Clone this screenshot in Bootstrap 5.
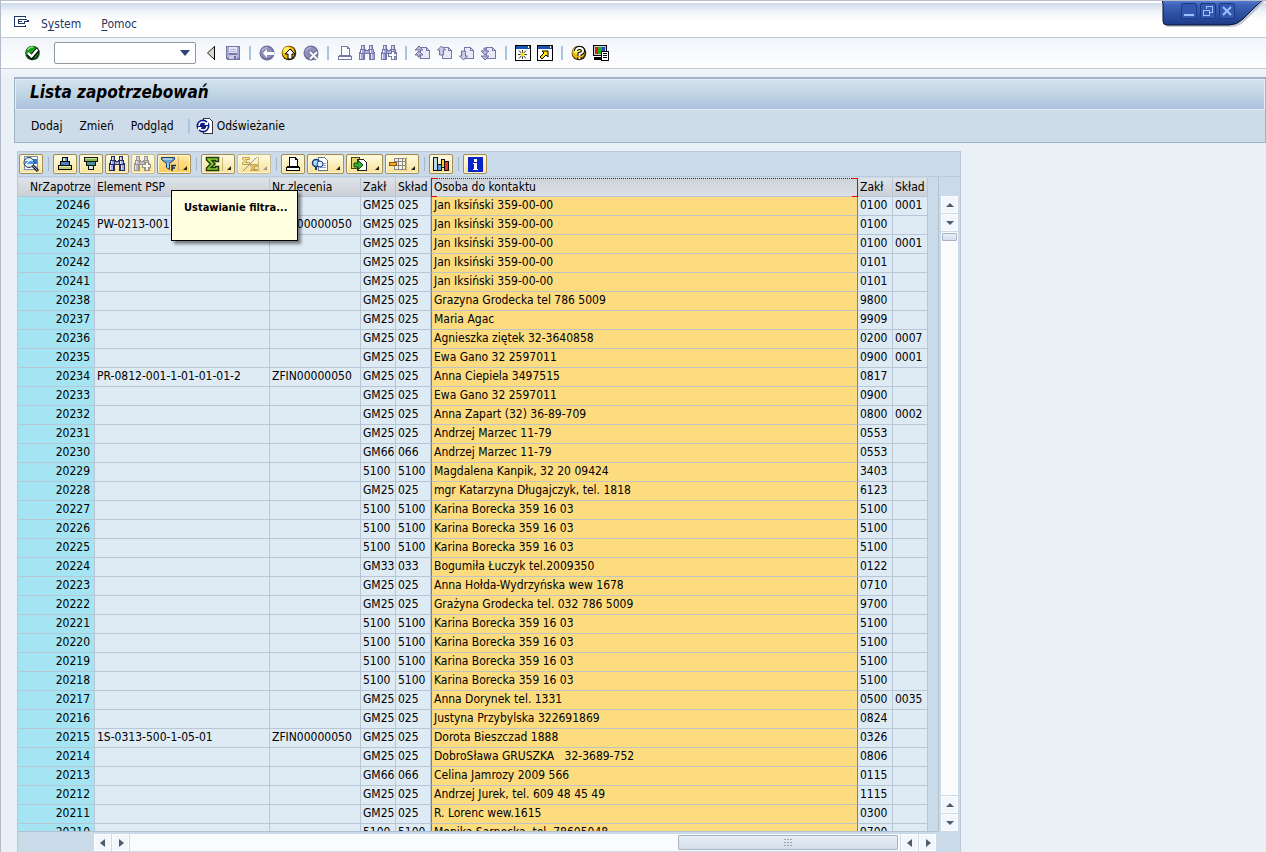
<!DOCTYPE html>
<html lang="pl">
<head>
<meta charset="utf-8">
<meta name="viewport" content="width=device-width, initial-scale=1">
<title>Lista zapotrzebowań</title>
<link href="https://cdn.jsdelivr.net/npm/bootstrap@5.3.0/dist/css/bootstrap.min.css" rel="stylesheet">
<style>
body{font-family:"DejaVu Sans Condensed","DejaVu Sans",sans-serif;font-size:12px;line-height:18px;color:#000;background:#e9f0f6;border-left:1px solid #b4bccb;border-top:1px solid #b4bccb}
button{padding:0;border:0;background:none;color:inherit;display:flex;align-items:center;justify-content:center}
svg{display:block;flex:none}
.px{shape-rendering:crispEdges}
.dim{color:#7878a8}
.menubar{height:37px;padding:8px 0 0 12px;gap:20px;border-top:2px solid #fff;border-bottom:1px solid #c3c8d2;background:linear-gradient(#cdd9ea,#eef3f9 8px,#fff 18px)}
.menubar a{color:#1f3864;text-decoration:none}
.menubar u{text-underline-offset:2px}
.winmenu{gap:10px}
.stdbar{height:31px;padding-left:23px;gap:6px;background:linear-gradient(#f1f4fa,#fff);border-bottom:1px solid #c3c8d2}
.cmd{width:142px;height:22px;margin:0 1px 0 7px;background:#fff;border:1px solid #8f979f;border-radius:2px}
.cmd input{border:0;outline:0;background:none;min-width:0}
.cmd button{width:22px}
.vsep{width:6px;height:14px;flex:none;background:linear-gradient(#a9c4de,#a9c4de) center/2px 100% no-repeat}
.workarea{padding:8px 0 0 13px;background:linear-gradient(#f3f6fa,#e9f0f6 8px)}
.titlepanel{border:1px solid #9fb2c8;border-top-width:2px;background:#cddce8}
.titlepanel h1{margin:0;height:31px;padding:0 0 5px 14px;font-size:17px;line-height:24px;font-weight:700;font-style:italic;background:linear-gradient(#d2e2ee,#c0d4e3 50%,#a9c1dc);border:1px solid #e3edf6}
.funcs{height:32px;padding-left:16px;gap:17px}
.funcs .vsep{margin-left:-5px}
.alv{width:944px;margin:8px 0 0 3px;border:1px solid #b9c9da;border-bottom:0;background:#cbdae9}
.alvbar{height:25px;gap:2px;padding-left:1px;border-bottom:1px solid #bccbdc}
.tb{width:24px;height:20px;flex:none;border:1px solid #a08d57;border-radius:2px;background:linear-gradient(#fffbe6,#fbeebb 50%,#f7e096);box-shadow:inset 0 0 0 1px #fff6d0}
.tb.split{width:34px}
.tb.menu{width:37px}
.tb.hot{background:linear-gradient(#ffe9ac,#ffd878 50%,#f9cb58)}
.tb.split,.tb.menu{position:relative;justify-content:flex-start;padding-left:3px}
.tb.split::after,.tb.menu::after{content:"";position:absolute;right:3px;bottom:3px;border-left:4px solid transparent;border-bottom:4px solid #222}
.tb.split::before{content:"";position:absolute;right:11px;top:2px;bottom:2px;width:1px;background:#cdb978}
.tb:disabled{border-color:#c9bd96;color:#777}
.tb:disabled::after{border-bottom-color:#999}
.alvbar .navy{color:#252c60}
.alvbar .vsep{background-image:linear-gradient(#aab6c5,#aab6c5);background-size:1px 100%}
.viewport{width:921px;border-right:1px solid #b2c1d2;border-bottom:1px solid #b2c1d2;padding-top:1px}
.grid{table-layout:fixed;width:910px;border-collapse:separate;border-spacing:0}
.grid th,.grid td{height:19px;padding:0 0 2px 2px;line-height:16px;white-space:pre;overflow:hidden;border-right:1px solid #b8c6d6;border-bottom:1px solid #b8c6d6;background:#deeaf4;font-weight:400}
.grid thead th{padding:1px 0 0 2px;line-height:17px;background:linear-gradient(#dde3ea,#d3d7dc 60%,#c9d0d8)}
.grid tbody th{background:#a5e4f2;text-align:right;padding-right:4px}
.grid thead th:first-child{text-align:right;padding-right:3px}
.grid td.sel{background:#fddc80;border-left:1px solid #c66a28;border-right-color:#c66a28;border-bottom-color:#bfc3c2}
.grid thead th.sel{position:relative;overflow:visible;border-top:1px dotted #333;padding:0 0 0 3px;background:linear-gradient(#ced3da,#dde0e5)}
.grid thead th.sel::before,.grid thead th.sel::after{content:"";position:absolute;top:-1px;bottom:-1px;width:6px;border:1px solid #e00000}
.grid thead th.sel::before{left:0;border-right:0}
.grid thead th.sel::after{right:-1px;border-left:0}
.sb{width:17px;height:17px;flex:none;background:#f3f6fb;border:1px solid #fbfdff;color:#4b5d6e}
.vscroll{width:17px;margin:19px 0 1px 2px;gap:1px}
.track{background:#fafbfc}
.thumb{background:linear-gradient(#e8eef5,#d3deea);border:1px solid #a8b4c0;border-radius:1px}
.vscroll .thumb{height:8px;width:15px;margin:1px}
.hscroll{padding:2px 0 1px 76px;width:918px;gap:1px}
.hscroll .thumb{width:220px;height:15px;margin:1px 2px 1px auto;color:#98a5b3}
.tip{position:absolute;left:153px;top:38px;width:127px;height:51px;padding:8px 12px;background:#ffffe1;border:1px solid #000;box-shadow:3px 3px 3px #0007;font-size:11px;font-weight:700;line-height:18px;white-space:nowrap;z-index:2}
.wincap{position:absolute;top:-1px;right:0;width:106px;height:30px}
.wincap .caps{position:absolute;left:21px;top:3px;gap:3px}
.wincap button{width:16px;height:16px;border:1px solid #1d3a80;border-radius:2px;background:#3358b0}
</style>
</head>
<body class="vh-100 overflow-hidden d-flex flex-column position-relative">
<svg width="0" height="0" class="position-absolute" aria-hidden="true">
<defs>
<symbol id="back" viewBox="0 0 16 16"><path d="M11.500 1.500v13L4.500 8z" fill="#d8d8d0" stroke="#222"/><path d="M11.500 1v14" stroke="#000"/></symbol>
<symbol id="ok" viewBox="0 0 16 16"><circle cx="8" cy="8" r="7.300" fill="#0b4a12"/><circle cx="7.500" cy="7.500" r="6" fill="#1d9a22"/><path d="M3 5q2-3.500 6-3" stroke="#7ee07a" fill="none" stroke-width="1.500"/><path d="M3.500 8.500 7 12l6.500-7.500" fill="none" stroke="#000" stroke-width="4.500"/><path d="M3.500 8 7 11.500 13 4.500" fill="none" stroke="#fff" stroke-width="2.500"/></symbol>
<symbol id="save" viewBox="0 0 16 16"><g class="px"><path d="M1 1h14v14H2l-1-1z" fill="#7676a6"/><path d="M2 2h2v11H2zM12 2h2v11h-2z" fill="#a9a9d4"/><path d="M4 2h8v6H4z" fill="#e6e6fa"/><path d="M5 4h6v1H5zM5 6h6v1H5z" fill="#b4b4d4"/><path d="M4 10h8v4H4z" fill="#c9c9e6"/><path d="M9 11h2v3H9z" fill="#6c6c9c"/></g></symbol>
<symbol id="gball" viewBox="0 0 16 16"><circle cx="8" cy="8" r="7.500" fill="#6d6d9d"/><circle cx="7.500" cy="7.500" r="6" fill="#8e8ebb"/><path d="M3 6q1-3 5-3.500" stroke="#c5c5e2" fill="none"/></symbol>
<symbol id="yball" viewBox="0 0 16 16"><circle cx="8" cy="8" r="7.300" fill="#3a2a00"/><circle cx="7.500" cy="7.500" r="6.300" fill="#f2b705"/><circle cx="6" cy="5.500" r="3.500" fill="#ffec60"/></symbol>
<symbol id="print" viewBox="0 0 16 16"><g class="px" stroke="currentColor" fill="#fff"><path d="M4.500 1.500h6l2 2v7h-8z"/><path d="M10.500 1.500v2h2" fill="none"/><path d="M1.500 11.500h13v3h-13z"/><path d="M4 10.500H2.500v1m10-1h1v1" fill="none"/></g></symbol>
<symbol id="bino" viewBox="0 0 16 16"><g class="px"><path d="M2 0h4v4h1v1h2V4h1V0h4v4h1v3h1v8h-6V9H6v6H0V7h1V4h1z" fill="currentColor"/><path d="M3 1h2v3H3zM11 1h2v3h-2zM2 5h3v3H2zM11 5h3v3h-3zM1 9h3v5H1zM12 9h3v5h-3zM6 6h4v2H6z" fill="#a8acd8"/><path d="M3 1h1v3H3zM11 1h1v3h-1zM2 5h1v3H2zM11 5h1v3h-1zM1 9h1v5H1zM12 9h1v5h-1z" fill="#e2e4f6"/></g></symbol>
<symbol id="plus" viewBox="0 0 16 16"><path class="px" d="M10 6h4v2h2v4h-2v3h-4v-3H7V8h3z" fill="currentColor"/><path class="px" d="M11 7h2v2h2v2h-2v3h-2v-3H8V9h3z" fill="#fff"/></symbol>
<symbol id="page" viewBox="0 0 16 16"><g class="px" stroke="#7878a8"><path d="M5.500 2.500h6l3 3v8h-9z" fill="#e9e9fa"/><path d="M11.500 2.500v3h3" fill="none"/></g></symbol>
<symbol id="win" viewBox="0 0 16 16"><g class="px"><path d="M0 0h16v16H0z" fill="#000"/><path d="M1 1h14v3H1z" fill="#1755b4"/><path d="M13 1h1v2h-1z" fill="#fff"/><path d="M1 4h14v11H1z" fill="#fff"/></g></symbol>
<symbol id="detail" viewBox="0 0 18 16"><g class="px"><path d="M2 0h14v14H2z" fill="#6f8fb4"/><path d="M3 1h12v12H3z" fill="#fff"/><path d="M3 3h12v5H3z" fill="#2e78d0"/><path d="M11 10h4v1h-4z" fill="#9ab"/></g><path d="m10.500 9.500 5.500 5.500" stroke="#222" stroke-width="3"/><path d="m10.500 9.500 5 5" stroke="#7fb5e0"/><circle cx="7" cy="6.500" r="5" fill="#d5effd" stroke="#333"/><path d="M3 5h8v3H3z" fill="#4f9be6"/><path d="m4 8 5-5" stroke="#fff"/></symbol>
<symbol id="asc" viewBox="0 0 16 16"><g class="px" stroke="#000"><path d="M5.500 1.500h5v4h-5z" fill="#5f94cf"/><path d="M3.500 5.500h9v4h-9z" fill="#4b7fc0"/><path d="M1.500 9.500h13v4h-13z" fill="#b9cf63"/></g><path class="px" d="M6 2h2v3H6zM2 10h12v1H2z" fill="#dcebc8"/></symbol>
<symbol id="desc" viewBox="0 0 16 16"><g class="px" stroke="#111"><path d="M1.500 1.500h13v4h-13z" fill="#82b84f"/><path d="M3.500 5.500h9v4h-9z" fill="#4b8f9c"/><path d="M5.500 9.500h5v4h-5z" fill="#cfe6ef"/></g><path class="px" d="M2 2h12v1H2z" fill="#cfe39a"/></symbol>
<symbol id="funnel" viewBox="0 0 16 16"><path d="M.5 1.500h13v2l-5 4v6l-3-2v-4l-5-4z" fill="#6f9fd0" stroke="#174070"/><path d="M2 3h9" stroke="#e8f5ff"/><path d="M7 7v5" stroke="#e8f5ff"/><path d="M11 15V9.500h4m-4 2.500h3" fill="none" stroke="#12285c" stroke-width="1.500"/></symbol>
<symbol id="sum" viewBox="0 0 16 16"><path d="M1.500 1.500h12v4h-3v-1H7L10 8l-4 3.500h4.500v-1h3v4h-12V12l4-4-4-4z" fill="#8fd12f" stroke="#1d3b08" stroke-width="1.500"/></symbol>
<symbol id="subt" viewBox="0 0 18 16"><g stroke="#a08a3b"><path d="M1.500 1.500h7v2h-4L6 5 4.500 6.500h4v2h-7V7l2-2-2-2z" fill="#ffe35a"/><path d="M9.500 8.500h7v2h-4L14 12l-1.500 1.500h4v1h-7V14l2-2-2-2z" fill="#ffb53c"/><path d="M16 1 2 15" stroke="#777"/></g></symbol>
<symbol id="preview" viewBox="0 0 18 16"><path class="px" d="M7.500 1.500h6l3 3v10h-9z" fill="#fff" stroke="#64738a"/><path class="px" d="M9 7h6M9 9h6M9 11h6" stroke="#88a0c5"/><circle cx="5" cy="7" r="3.500" fill="#b3dcfa" stroke="#173c86" stroke-width="1.500"/><circle cx="9" cy="8" r="3" fill="#dceffd" stroke="#173c86"/><path d="M5 10v4" stroke="#173c86" stroke-width="2"/></symbol>
<symbol id="export" viewBox="0 0 18 16"><g class="px"><path d="M1.500 1.500h8v11h-8z" fill="#e3d269" stroke="#464616"/><path d="M7.500 3.500h6l3 3v8h-9z" fill="#fff" stroke="#222"/></g><path d="M4 7h4V4l5 5-5 5v-3H4z" fill="#38a834" stroke="#0c4b18"/></symbol>
<symbol id="layout" viewBox="0 0 18 16"><g class="px"><path d="M5 2h12v12H5z" fill="#888"/><path d="M6 3h3v2H6zM10 3h3v2h-3zM14 3h2v2h-2zM6 6h3v3H6zM10 6h3v3h-3zM14 6h2v3h-2zM6 10h3v3H6zM10 10h3v3h-3zM14 10h2v3h-2z" fill="#f7f2df"/><path d="M0.500 6.500h7v3h-7z" fill="#ffab27" stroke="#87520b"/></g></symbol>
<symbol id="chart" viewBox="0 0 18 16"><g class="px" stroke="#111"><path d="M1.500 1.500h4v13h-4z" fill="#bdd7ee"/><path d="M5.500 8.500h4v6h-4z" fill="#63a0db"/><path d="M9.500 3.500h3v8h-3z" fill="#e7d62f"/><path d="M12.500 5.500h4v9h-4z" fill="#e33"/></g></symbol>
<symbol id="left" viewBox="0 0 8 8"><path d="M6 0v8L1 4z" fill="currentColor"/></symbol>
<symbol id="right" viewBox="0 0 8 8"><path d="M2 0v8l5-4z" fill="currentColor"/></symbol>
<symbol id="up" viewBox="0 0 8 8"><path d="M0 6h8L4 2z" fill="currentColor"/></symbol>
<symbol id="down" viewBox="0 0 8 8"><path d="M0 2h8L4 6z" fill="currentColor"/></symbol>
</defs></svg>

<nav class="menubar d-flex flex-shrink-0 align-items-start" aria-label="Menu">
<div class="winmenu d-flex">
<button type="button" aria-label="Menu okna"><svg width="18" height="14" viewBox="0 0 18 14" class="px"><path d="M12.500 3V1.500h-11v10h11V10" fill="#fff" stroke="#1f3864"/><path d="M5.500 4.500h6.500l3.500 1v1h-4v2h-6z" fill="#fff" stroke="#1f3864"/><path d="M6 6.500h3" stroke="#1f3864"/></svg></button>
<a href="#" class="mt-1">S<u>y</u>stem</a></div>
<a href="#" class="mt-1"><u>P</u>omoc</a>
</nav>

<div class="stdbar d-flex flex-shrink-0 align-items-center" role="toolbar">
<button type="button" aria-label="Enter"><svg width="17" height="16"><use href="#ok"/></svg></button>
<div class="cmd d-flex"><input type="text" class="flex-grow-1" aria-label="Pole poleceń"><button type="button" aria-label="Rozwiń"><svg width="10" height="6"><path d="M0 0h10L5 6z" fill="#2b4674"/></svg></button></div>
<button type="button" aria-label="Zwiń"><svg width="16" height="16"><use href="#back"/></svg></button>
<button type="button" aria-label="Zapisz"><svg width="16" height="16"><use href="#save"/></svg></button>
<span class="vsep"></span>
<button type="button" aria-label="Wstecz"><svg width="16" height="16"><use href="#gball"/><path d="m4 8 4-4v3h7v3H8v3z" fill="#fff"/></svg></button>
<button type="button" aria-label="Zakończ"><svg width="16" height="16"><use href="#yball"/><path d="m9 4 5 5h-3v5H7V9H4z" fill="#fff" stroke="#000"/></svg></button>
<button type="button" aria-label="Anuluj"><svg width="16" height="16"><use href="#gball"/><path d="m7 7 7 7m0-7-7 7" stroke="#6d6d9d" stroke-width="4"/><path d="m7 7 7 7m0-7-7 7" stroke="#fff" stroke-width="2"/></svg></button>
<span class="vsep"></span>
<button type="button" class="dim" aria-label="Drukuj"><svg width="16" height="16"><use href="#print"/></svg></button>
<button type="button" class="dim" aria-label="Szukaj"><svg width="16" height="16"><use href="#bino"/></svg></button>
<button type="button" class="dim" aria-label="Szukaj dalej"><svg width="16" height="16"><use href="#bino"/><use href="#plus"/></svg></button>
<span class="vsep"></span>
<button type="button" aria-label="Pierwsza strona"><svg width="16" height="16"><use href="#page"/><path d="m0 5 4-4 4 4zm0 5 4-4 4 4H5v2H3v-2z" fill="#b9b9dc" stroke="#7070a0"/></svg></button>
<button type="button" aria-label="Poprzednia strona"><svg width="16" height="16"><use href="#page"/><path d="m0.500 5 4-4 4 4h-2v5h-4V5z" fill="#c9c9e6" stroke="#7070a0"/></svg></button>
<button type="button" aria-label="Następna strona"><svg width="16" height="16"><use href="#page"/><path d="m0.500 11 4 4 4-4h-2V6h-4v5z" fill="#c9c9e6" stroke="#7070a0"/></svg></button>
<button type="button" aria-label="Ostatnia strona"><svg width="16" height="16"><use href="#page"/><path d="m0 11 4 4 4-4zm0-5 4 4 4-4H5V3H3v3z" fill="#b9b9dc" stroke="#7070a0"/></svg></button>
<span class="vsep"></span>
<button type="button" aria-label="Nowy tryb"><svg width="16" height="16"><use href="#win"/><path d="M7.500 5v9M3 9.500h9m-8-4 7 8m0-8-7 8" stroke="#333"/><circle cx="7.500" cy="9.500" r="2" fill="#ffe600"/></svg></button>
<button type="button" aria-label="Skrót"><svg width="16" height="16"><use href="#win"/><path d="m3 12 4-4-2-2h6v6L9 10l-4 4z" fill="#ffe600" stroke="#000"/></svg></button>
<span class="vsep"></span>
<button type="button" aria-label="Pomoc"><svg width="16" height="16"><use href="#yball"/><path d="M5 6q0-3 3.500-3T12 6q0 2-3.500 3v2m0 1v2" fill="none" stroke="#000" stroke-width="4"/><path d="M5 6q0-3 3.500-3T12 6q0 2-3.500 3v2m0 1v2" fill="none" stroke="#fff" stroke-width="2"/></svg></button>
<button type="button" aria-label="Układ lokalny"><svg width="16" height="16" class="px"><path d="M0 0h14v11H0zM1 12h8v3H1z" fill="#000"/><path d="M1 1h12v9H1z" fill="#ccc"/><path d="M2 2h3v7H2z" fill="#e31818"/><path d="M5 2h4v7H5z" fill="#16b21d"/><path d="M9 2h3v5H9z" fill="#2346d0"/><path d="M8.500 6.500h7v9h-7z" fill="#fff" stroke="#000"/><path d="M10 8.500h4m-4 2h4m-4 2h4" stroke="#000"/></svg></button>
</div>

<main class="workarea d-flex flex-column flex-grow-1 overflow-hidden">
<section class="titlepanel flex-shrink-0">
<h1>Lista zapotrzebowań</h1>
<div class="funcs d-flex align-items-center">
<button type="button">Dodaj</button><button type="button">Zmień</button><button type="button">Podgląd</button>
<div class="d-flex align-items-center gap-1"><span class="vsep"></span>
<button type="button"><svg width="17" height="16"><path class="px" d="M7.500.5h6l3 3v12h-9z" fill="#fff" stroke="#333"/><circle cx="7" cy="8" r="6.500" fill="#101c86"/><path d="M3 8q0-4 4-4 2 0 3 1.500M11 8q0 4-4 4-2 0-3-1.500" fill="none" stroke="#fff" stroke-width="1.500"/><path d="M8 7h4V3zM6 9H2v4z" fill="#fff"/></svg><span class="ps-1">Odświeżanie</span></button></div>
</div>
</section>

<section class="alv d-flex flex-column flex-grow-1 overflow-hidden position-relative">
<div class="alvbar d-flex align-items-center flex-shrink-0" role="toolbar">
<button type="button" class="tb" aria-label="Szczegóły"><svg width="18" height="16"><use href="#detail"/></svg></button>
<span class="vsep"></span>
<button type="button" class="tb" aria-label="Sortuj rosnąco"><svg width="16" height="16"><use href="#asc"/></svg></button>
<button type="button" class="tb" aria-label="Sortuj malejąco"><svg width="16" height="16"><use href="#desc"/></svg></button>
<button type="button" class="tb navy" aria-label="Szukaj"><svg width="16" height="16"><use href="#bino"/></svg></button>
<button type="button" class="tb" aria-label="Szukaj dalej" disabled><svg width="18" height="16" opacity=".75"><use href="#bino" width="16"/><use href="#plus" width="16" x="1"/></svg></button>
<button type="button" class="tb split hot" aria-label="Ustawianie filtra"><svg width="16" height="16"><use href="#funnel"/></svg></button>
<span class="vsep"></span>
<button type="button" class="tb split" aria-label="Suma"><svg width="16" height="16"><use href="#sum"/></svg></button>
<button type="button" class="tb split" aria-label="Suma częściowa" disabled><svg width="18" height="16" opacity=".75"><use href="#subt"/></svg></button>
<span class="vsep"></span>
<button type="button" class="tb" aria-label="Drukuj"><svg width="16" height="16"><use href="#print"/></svg></button>
<button type="button" class="tb menu" aria-label="Widoki"><svg width="18" height="16"><use href="#preview"/></svg></button>
<button type="button" class="tb menu" aria-label="Eksport"><svg width="18" height="16"><use href="#export"/></svg></button>
<button type="button" class="tb split" aria-label="Układ"><svg width="18" height="16"><use href="#layout"/></svg></button>
<span class="vsep"></span>
<button type="button" class="tb" aria-label="Grafika"><svg width="18" height="16"><use href="#chart"/></svg></button>
<span class="vsep"></span>
<button type="button" class="tb" aria-label="Informacja"><svg width="15" height="15" class="px"><path d="M0 0h15v15H0z" fill="#0a23c8"/><path d="M6 2h3v3H6zM5 6h4v6h1v1H5v-1h1V7H5z" fill="#fff"/></svg></button>
</div>
<div class="tip" role="tooltip">Ustawianie filtra...</div>
<div class="d-flex flex-grow-1 overflow-hidden">
<div class="viewport overflow-hidden">
<table class="grid">
<colgroup><col width="77"><col width="175"><col width="91"><col width="35"><col width="35"><col width="427"><col width="35"><col width="35"></colgroup>
<thead><tr><th>NrZapotrze</th><th>Element PSP</th><th>Nr zlecenia</th><th>Zakł</th><th>Skład</th><th class="sel">Osoba do kontaktu</th><th>Zakł</th><th>Skład</th></tr></thead>
<tbody id="rows"></tbody>
</table>
</div>
<div class="vscroll d-flex flex-column flex-shrink-0">
<button type="button" class="sb" aria-label="W górę"><svg width="8" height="8"><use href="#up"/></svg></button>
<button type="button" class="sb" aria-label="W dół"><svg width="8" height="8"><use href="#down"/></svg></button>
<div class="track flex-grow-1"><div class="thumb"></div></div>
<button type="button" class="sb" aria-label="W górę"><svg width="8" height="8"><use href="#up"/></svg></button>
<button type="button" class="sb" aria-label="W dół"><svg width="8" height="8"><use href="#down"/></svg></button>
</div>
</div>
<div class="hscroll d-flex flex-shrink-0">
<button type="button" class="sb" aria-label="W lewo"><svg width="8" height="8"><use href="#left"/></svg></button>
<button type="button" class="sb" aria-label="W prawo"><svg width="8" height="8"><use href="#right"/></svg></button>
<div class="track d-flex flex-grow-1"><div class="thumb d-flex align-items-center justify-content-center"><svg width="8" height="7"><path d="M0 .5h8M0 3.500h8M0 6.500h8" stroke="currentColor" stroke-dasharray="2 1"/></svg></div></div>
<button type="button" class="sb" aria-label="W lewo"><svg width="8" height="8"><use href="#left"/></svg></button>
<button type="button" class="sb" aria-label="W prawo"><svg width="8" height="8"><use href="#right"/></svg></button>
</div>
</section>
</main>

<div class="wincap">
<svg width="106" height="30"><defs><linearGradient id="cap" x2="0" y2="1"><stop stop-color="#5d86d8"/><stop offset=".25" stop-color="#3c62b8"/><stop offset="1" stop-color="#1d3a86"/></linearGradient></defs><path d="M0 0q4 1 4 6v16q0 4 4 5h63q8 0 14-6L98 8q5-6 8-7z" fill="#8a93a6" opacity=".5"/><path d="M0-1q3 1 3 5v17q0 4 4 4h62q8 0 14-6L96 6q5-6 10-7z" fill="url(#cap)" stroke="#0a1430"/></svg>
<div class="caps d-flex">
<button type="button" aria-label="Minimalizuj"><svg width="10" height="10" class="px"><path d="M0 8h10v2H0z" fill="#9fc0ff"/></svg></button>
<button type="button" aria-label="Przywróć"><svg width="10" height="10" class="px"><path d="M3 3V.5h6.500v6H7M.5 4h6v5.500h-6zM0 4.500h7" fill="none" stroke="#9fc0ff"/></svg></button>
<button type="button" aria-label="Zamknij"><svg width="10" height="10"><path d="m1 1 8 8m0-8-8 8" stroke="#9fc0ff" stroke-width="2"/></svg></button>
</div>
</div>

<script src="https://cdn.jsdelivr.net/npm/bootstrap@5.3.0/dist/js/bootstrap.bundle.min.js"></script>
<script>
// number | PSP element | order | plant | storage | contact | plant | storage
const data = `20246|||GM25|025|Jan Iksiński 359-00-00|0100|0001
20245|PW-0213-001|ZFIN00000050|GM25|025|Jan Iksiński 359-00-00|0100|
20243|||GM25|025|Jan Iksiński 359-00-00|0100|0001
20242|||GM25|025|Jan Iksiński 359-00-00|0101|
20241|||GM25|025|Jan Iksiński 359-00-00|0101|
20238|||GM25|025|Grazyna Grodecka tel 786 5009|9800|
20237|||GM25|025|Maria Agac|9909|
20236|||GM25|025|Agnieszka ziętek 32-3640858|0200|0007
20235|||GM25|025|Ewa Gano 32 2597011|0900|0001
20234|PR-0812-001-1-01-01-01-2|ZFIN00000050|GM25|025|Anna Ciepiela 3497515|0817|
20233|||GM25|025|Ewa Gano 32 2597011|0900|
20232|||GM25|025|Anna Zapart (32) 36-89-709|0800|0002
20231|||GM25|025|Andrzej Marzec 11-79|0553|
20230|||GM66|066|Andrzej Marzec 11-79|0553|
20229|||5100|5100|Magdalena Kanpik, 32 20 09424|3403|
20228|||GM25|025|mgr Katarzyna Długajczyk, tel. 1818|6123|
20227|||5100|5100|Karina Borecka 359 16 03|5100|
20226|||5100|5100|Karina Borecka 359 16 03|5100|
20225|||5100|5100|Karina Borecka 359 16 03|5100|
20224|||GM33|033|Bogumiła Łuczyk tel.2009350|0122|
20223|||GM25|025|Anna Hołda-Wydrzyńska wew 1678|0710|
20222|||GM25|025|Grażyna Grodecka tel. 032 786 5009|9700|
20221|||5100|5100|Karina Borecka 359 16 03|5100|
20220|||5100|5100|Karina Borecka 359 16 03|5100|
20219|||5100|5100|Karina Borecka 359 16 03|5100|
20218|||5100|5100|Karina Borecka 359 16 03|5100|
20217|||GM25|025|Anna Dorynek tel. 1331|0500|0035
20216|||GM25|025|Justyna Przybylska 322691869|0824|
20215|1S-0313-500-1-05-01|ZFIN00000050|GM25|025|Dorota Bieszczad 1888|0326|
20214|||GM25|025|DobroSława GRUSZKA   32-3689-752|0806|
20213|||GM66|066|Celina Jamrozy 2009 566|0115|
20212|||GM25|025|Andrzej Jurek, tel. 609 48 45 49|1115|
20211|||GM25|025|R. Lorenc wew.1615|0300|
20210|||5100|5100|Monika Sarnecka, tel. 78605048|9700|`;
const body = document.getElementById('rows');
for (const line of data.split('\n')) {
  const tr = body.insertRow();
  line.split('|').forEach((text, i) => {
    const cell = document.createElement(i ? 'td' : 'th');
    if (!i) cell.scope = 'row';
    if (i === 5) cell.className = 'sel';
    cell.textContent = text;
    tr.append(cell);
  });
}
</script>
</body>
</html>
